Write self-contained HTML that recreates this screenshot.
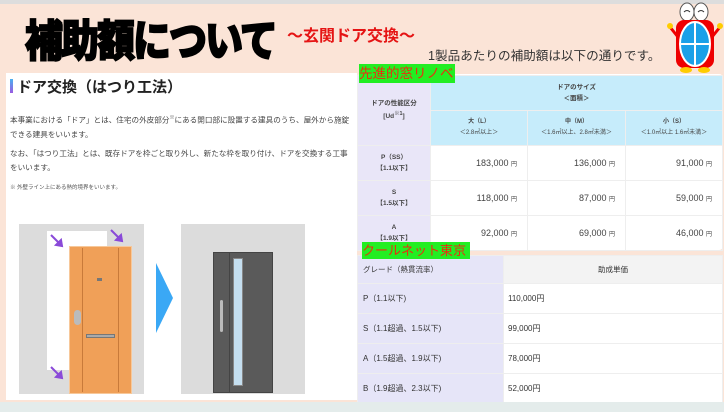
<!DOCTYPE html>
<html><head><meta charset="utf-8"><style>
*{margin:0;padding:0;box-sizing:border-box}
body{width:724px;height:412px;overflow:hidden;background:#fbe4d7;font-family:"Liberation Sans","Noto Sans CJK JP",sans-serif;position:relative}
.a{position:absolute}
table{border-collapse:collapse;position:absolute;font-size:7px;color:#444}
td{border:1px solid #eee}
</style></head><body>
<div class="a" style="left:0;top:0;width:724px;height:4px;background:#ddd"></div>
<div class="a" style="left:25px;top:6px;font-size:38px;font-weight:900;letter-spacing:-2px;color:#000;-webkit-text-stroke:1.5px #000;transform:scaleY(1.15);transform-origin:top">補助額について</div>
<div class="a" style="left:287px;top:22px;font-size:16px;font-weight:bold;color:#e51414">～玄関ドア交換～</div>
<div class="a" style="left:428px;top:45px;font-size:12.6px;color:#333;white-space:nowrap">1製品あたりの補助額は以下の通りです。</div>
<svg class="a" style="left:666px;top:2px" width="58" height="72" viewBox="0 0 58 72">
<ellipse cx="21" cy="10" rx="7" ry="9" fill="#fff" stroke="#555"/><ellipse cx="35" cy="10" rx="7" ry="9" fill="#fff" stroke="#555"/>
<path d="M18 10q3-3 6 0M32 10q3-3 6 0" stroke="#333" fill="none"/>
<line x1="12" y1="35" x2="4" y2="25" stroke="#e00" stroke-width="3"/><line x1="46" y1="35" x2="54" y2="25" stroke="#e00" stroke-width="3"/>
<circle cx="4" cy="24" r="3" fill="#fc0"/><circle cx="54" cy="24" r="3" fill="#fc0"/>
<rect x="10" y="18" width="38" height="48" rx="8" fill="#e00"/>
<ellipse cx="29" cy="42" rx="15" ry="22" fill="#1aa0e8" stroke="#fff" stroke-width="2"/>
<path d="M29 20v44M14 42h30" stroke="#fff" stroke-width="2"/>
<ellipse cx="20" cy="68" rx="6" ry="3" fill="#fc0"/><ellipse cx="38" cy="68" rx="6" ry="3" fill="#fc0"/>
</svg>
<div class="a" style="left:6px;top:73px;width:351px;height:327px;background:#fff"></div>
<div class="a" style="left:10px;top:79px;width:3px;height:14px;background:linear-gradient(#4ab0f0,#9a5ae0)"></div>
<div class="a" style="left:17px;top:76px;font-size:15px;font-weight:bold;color:#222">ドア交換（はつり工法）</div>
<div class="a" style="left:10px;top:111px;width:342px;font-size:7.6px;line-height:14px;color:#444">本事業における「ドア」とは、住宅の外皮部分<sup style="font-size:5px">※</sup>にある開口部に設置する建具のうち、屋外から施錠できる建具をいいます。</div>
<div class="a" style="left:10px;top:147px;width:342px;font-size:7.6px;line-height:14px;color:#444">なお、「はつり工法」とは、既存ドアを枠ごと取り外し、新たな枠を取り付け、ドアを交換する工事をいいます。</div>
<div class="a" style="left:10px;top:183px;font-size:5.5px;color:#555">※ 外壁ライン上にある熱的境界をいいます。</div>
<div class="a" style="left:19px;top:224px;width:125px;height:170px;background:#dcdcdc"></div>
<div class="a" style="left:47px;top:231px;width:60px;height:139px;background:#fff"></div>
<div class="a" style="left:69px;top:246px;width:63px;height:148px;background:#f0a058;border:1px solid #f7c89a"></div>
<div class="a" style="left:82px;top:248px;width:1px;height:144px;background:#c87a3a"></div>
<div class="a" style="left:118px;top:248px;width:1px;height:144px;background:#c87a3a"></div>
<div class="a" style="left:74px;top:310px;width:7px;height:15px;border-radius:4px;background:#bbb"></div>
<div class="a" style="left:86px;top:334px;width:29px;height:4px;background:#aaa;border:1px solid #777"></div>
<div class="a" style="left:97px;top:278px;width:5px;height:3px;background:#777"></div>
<svg class="a" style="left:0;top:0" width="140" height="412">
<g stroke="#8a4ad8" stroke-width="2" fill="#8a4ad8">
<path d="M51 235L60 244" /><path d="M62 246L56 245L61 240Z"/>
<path d="M111 230L120 239"/><path d="M122 241L116 240L121 235Z"/>
<path d="M51 367L60 376"/><path d="M62 378L56 377L61 372Z"/>
</g></svg>
<svg class="a" style="left:156px;top:263px" width="18" height="71"><path d="M0 0L17 35L0 70Z" fill="#3aa8f5"/></svg>
<div class="a" style="left:181px;top:224px;width:124px;height:170px;background:#dcdcdc"></div>
<div class="a" style="left:213px;top:252px;width:60px;height:141px;background:#5a5a5a;border:1px solid #444"></div>
<div class="a" style="left:229px;top:252px;width:1px;height:141px;background:#444"></div>
<div class="a" style="left:233px;top:258px;width:10px;height:128px;background:#c5dff0;border:1px solid #888"></div>
<div class="a" style="left:220px;top:300px;width:3px;height:32px;background:#bbb;border-radius:2px"></div>
<div class="a" style="left:357px;top:74px;width:366px;height:176px;background:#fff;border-radius:4px"></div>
<table style="left:357px;top:75px;width:366px">
<tr style="height:35px"><td rowspan="2" style="width:73px;background:#e9e6f8;text-align:center;font-weight:bold;line-height:11px;font-size:6.5px">ドアの性能区分<br>[Ud<sup>※1</sup>]</td><td colspan="3" style="background:#c6ecfb;text-align:center;font-weight:bold;line-height:11px;font-size:6.5px">ドアのサイズ<br>＜面積＞</td></tr>
<tr style="height:35px;background:#c6ecfb;text-align:center;line-height:11px;font-size:6px"><td style="width:97px"><b>大（L）</b><br>＜2.8㎡以上＞</td><td style="width:98px"><b>中（M）</b><br>＜1.6㎡以上、2.8㎡未満＞</td><td><b>小（S）</b><br>＜1.0㎡以上 1.6㎡未満＞</td></tr>
<tr style="height:35px"><td style="background:#e9e6f8;text-align:center;font-weight:bold;line-height:11px;font-size:6.5px">P（SS）<br>【1.1以下】</td><td style="text-align:right;padding-right:10px;font-size:9px">183,000 <small style="font-size:6px">円</small></td><td style="text-align:right;padding-right:10px;font-size:9px">136,000 <small style="font-size:6px">円</small></td><td style="text-align:right;padding-right:10px;font-size:9px">91,000 <small style="font-size:6px">円</small></td></tr>
<tr style="height:35px"><td style="background:#e9e6f8;text-align:center;font-weight:bold;line-height:11px;font-size:6.5px">S<br>【1.5以下】</td><td style="text-align:right;padding-right:10px;font-size:9px">118,000 <small style="font-size:6px">円</small></td><td style="text-align:right;padding-right:10px;font-size:9px">87,000 <small style="font-size:6px">円</small></td><td style="text-align:right;padding-right:10px;font-size:9px">59,000 <small style="font-size:6px">円</small></td></tr>
<tr style="height:35px"><td style="background:#e9e6f8;text-align:center;font-weight:bold;line-height:11px;font-size:6.5px">A<br>【1.9以下】</td><td style="text-align:right;padding-right:10px;font-size:9px">92,000 <small style="font-size:6px">円</small></td><td style="text-align:right;padding-right:10px;font-size:9px">69,000 <small style="font-size:6px">円</small></td><td style="text-align:right;padding-right:10px;font-size:9px">46,000 <small style="font-size:6px">円</small></td></tr>
</table>
<table style="left:357px;top:255px;width:366px;font-size:8px;color:#333;background:#fff">
<tr style="height:28px"><td style="width:146px;background:#e6e5f8;padding-left:5px;font-size:7.5px">グレード（熱貫流率）</td><td style="background:#f3f3f3;text-align:center;font-size:7.5px">助成単価</td></tr>
<tr style="height:30px"><td style="background:#e6e5f8;padding-left:5px">P（1.1以下)</td><td style="padding-left:4px">110,000円</td></tr>
<tr style="height:30px"><td style="background:#e6e5f8;padding-left:5px">S（1.1超過、1.5以下)</td><td style="padding-left:4px">99,000円</td></tr>
<tr style="height:30px"><td style="background:#e6e5f8;padding-left:5px">A（1.5超過、1.9以下)</td><td style="padding-left:4px">78,000円</td></tr>
<tr style="height:30px"><td style="background:#e6e5f8;padding-left:5px">B（1.9超過、2.3以下)</td><td style="padding-left:4px">52,000円</td></tr>
</table>
<div class="a" style="left:359px;top:64px;width:96px;height:19px;background:#22ee22;color:#e83010;font-size:13.5px;line-height:19px;white-space:nowrap;overflow:hidden">先進的窓リノベ</div>
<div class="a" style="left:362px;top:242px;width:108px;height:17px;background:#22ee22;color:#e83010;font-size:13px;line-height:17px;white-space:nowrap;overflow:hidden">クールネット東京</div>
<div class="a" style="left:0;top:402px;width:724px;height:10px;background:#e4eceb"></div>
</body></html>
